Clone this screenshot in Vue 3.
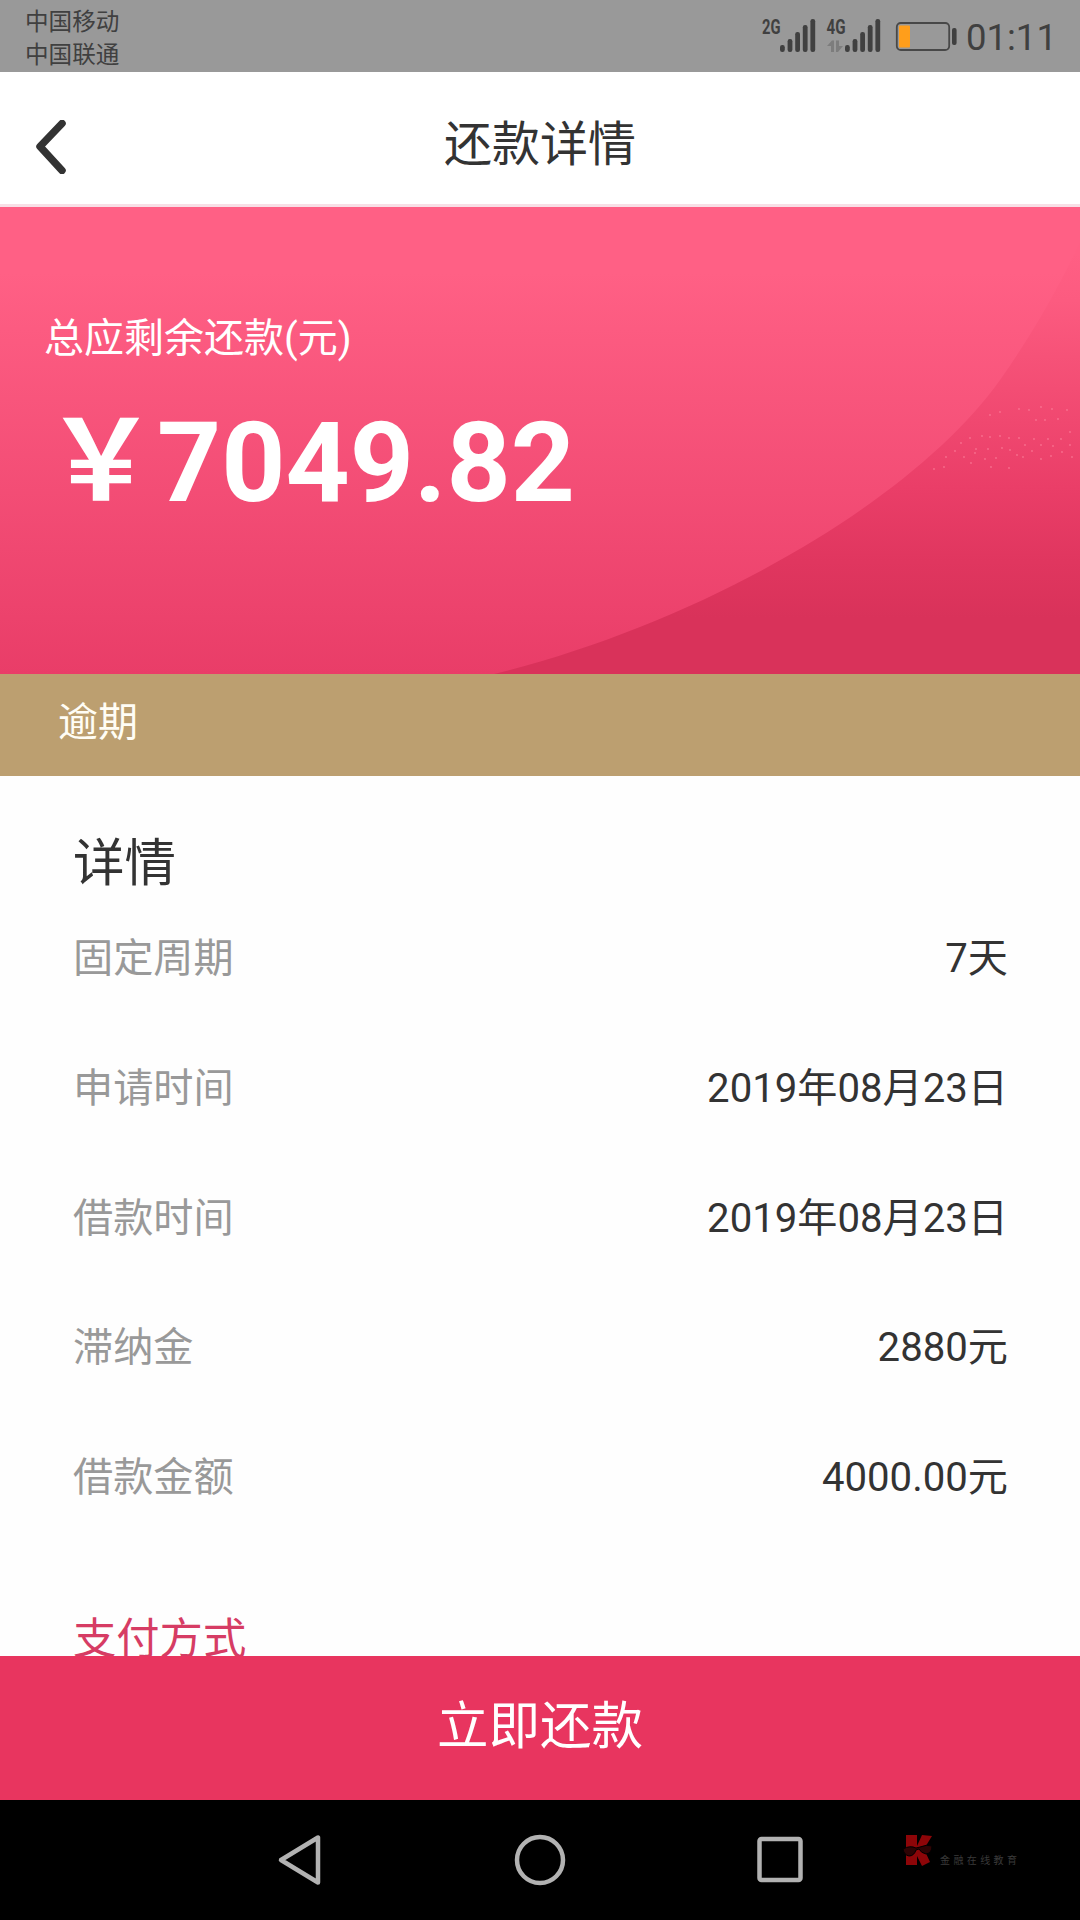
<script setup>
const rows = [
  { label: '固定周期', value: '7天' },
  { label: '申请时间', value: '2019年08月23日' },
  { label: '借款时间', value: '2019年08月23日' },
  { label: '滞纳金', value: '2880元' },
  { label: '借款金额', value: '4000.00元' }
]

// bar heights of the signal meter, shortest first
const bars = [7, 13, 20, 27, 33]

// faint sparkle specks on the banner, in banner coordinates
const specks = [
  [990, 208], [1000, 205], [1019, 202], [1029, 203], [1041, 200], [1052, 202], [1067, 203],
  [1036, 213], [1045, 213], [1058, 212], [1070, 225], [961, 236], [970, 231], [982, 229],
  [990, 230], [1000, 229], [1009, 231], [1019, 231], [1034, 232], [1048, 232], [1061, 232],
  [955, 244], [976, 242], [988, 242], [1002, 241], [1010, 243], [1025, 238], [1041, 238],
  [1053, 239], [1070, 238], [946, 250], [964, 250], [975, 246], [1032, 244], [1062, 245],
  [985, 252], [996, 251], [1017, 248], [1023, 250], [1041, 252], [1051, 249], [1072, 250],
  [934, 262], [944, 260], [971, 256], [991, 260], [1009, 261]
]
</script>

<template>
  <div class="screen">
    <header class="status">
      <div class="carriers">
        <span>中国移动</span>
        <span>中国联通</span>
      </div>
      <svg class="indicators" width="200" height="72" viewBox="760 0 200 72">
        <g class="net">
          <text x="762" y="34" textLength="18.5" lengthAdjust="spacingAndGlyphs">2G</text>
          <text x="826.5" y="34" textLength="19" lengthAdjust="spacingAndGlyphs">4G</text>
        </g>
        <g fill="#404040">
          <rect v-for="(h, i) in bars" :key="'a' + i" :x="780 + i * 7.6" :y="52 - h" width="4.8" :height="h" rx="2.2" />
          <rect v-for="(h, i) in bars" :key="'b' + i" :x="845 + i * 7.6" :y="52 - h" width="4.8" :height="h" rx="2.2" />
        </g>
        <path d="M827 46L832 40.500H834V52H831V46ZM836 40.500H839V46H843L838 52H836Z" fill="#7d7d7d" />
        <rect x="896.800" y="23" width="52.400" height="27" rx="4" fill="none" stroke="#484848" stroke-width="1.8" />
        <rect x="899" y="25.500" width="11" height="22" rx="1" fill="#ff9e1b" />
        <rect x="952" y="28" width="4.600" height="17" rx="2" fill="#404040" />
      </svg>
      <time class="clock">01:11</time>
    </header>

    <nav class="titlebar">
      <svg class="back" width="30" height="54" viewBox="0 0 30 54">
        <path d="M26 3.500L4 26.500L26 50.500" fill="none" stroke="#333" stroke-width="7.500" stroke-linecap="round" stroke-linejoin="round" />
      </svg>
      <h1>还款详情</h1>
    </nav>

    <section class="banner">
      <svg class="swoosh" width="1080" height="467" viewBox="0 0 1080 467">
        <defs>
          <linearGradient id="shade" x1="0" y1="0" x2="0" y2="467" gradientUnits="userSpaceOnUse">
            <stop offset=".1" stop-color="#ff5f84" />
            <stop offset=".2" stop-color="#fc5b80" />
            <stop offset=".32" stop-color="#f65278" />
            <stop offset=".46" stop-color="#f04870" />
            <stop offset=".6" stop-color="#ea3e68" />
            <stop offset=".76" stop-color="#e0365f" />
            <stop offset=".88" stop-color="#d9325a" />
            <stop offset="1" stop-color="#d9325a" />
          </linearGradient>
        </defs>
        <path d="M486 469C700 418 915 293 1000 173C1035 123 1060 78 1080 35V469Z" fill="url(#shade)" />
        <circle v-for="(p, i) in specks" :key="i" :cx="p[0]" :cy="p[1]" r=".9" fill="#ff8aa4" opacity=".6" />
      </svg>
      <p class="caption">总应剩余还款(元)</p>
      <p class="amount">￥7049.82</p>
    </section>

    <div class="state">逾期</div>

    <main class="details">
      <h2>详情</h2>
      <dl>
        <div v-for="row in rows" :key="row.label" class="row">
          <dt>{{ row.label }}</dt>
          <dd>{{ row.value }}</dd>
        </div>
      </dl>
      <h3>支付方式</h3>
    </main>

    <button class="pay">立即还款</button>

    <footer class="softkeys">
      <svg width="46" height="52" viewBox="0 0 46 52"><path d="M41 3.500V48.500L4 26Z" /></svg>
      <svg width="52" height="52" viewBox="0 0 52 52"><circle cx="26" cy="26" r="23" /></svg>
      <svg width="48" height="52" viewBox="0 0 48 52"><rect x="3.500" y="5" width="41" height="41" rx="2" /></svg>
      <div class="brand">
        <svg class="logo" width="32" height="32" viewBox="0 0 32 32">
          <path class="k" d="M4 1H15V12L20 1L30 2L22 15L28 28L20 32L15 22V31H4Z" />
          <path class="specs" d="M1 15Q8 11 14 14L18 13Q25 10 30 12Q30 19 24 20Q19 19 17 15L14 16Q12 22 7 22Q2 21 1 15Z" />
        </svg>
        <span>金融在线教育</span>
      </div>
    </footer>
  </div>
</template>

<style>
body {
  margin: 0;
  background: #fff;
}
</style>

<style scoped>
.screen {
  width: 1080px;
  height: 1920px;
  display: flex;
  flex-direction: column;
  overflow: hidden;
  background: #fefefe;
  color: #333;
  font-family: Roboto, "Noto Sans CJK SC", sans-serif;
}
h1, h2, h3, p, dl, dd {
  margin: 0;
  font-weight: 400;
}
.status {
  flex: none;
  height: 72px;
  display: flex;
  background: #999;
  color: #404040;
}
.carriers {
  flex: 1;
  display: flex;
  flex-direction: column;
  padding: 6px 0 0 25px;
  font-size: 23.6px;
  line-height: 33px;
}
.indicators {
  flex: none;
}
.net {
  font: 700 20px Roboto, sans-serif;
  fill: #404040;
}
.clock {
  width: 114px;
  padding-left: 6px;
  font-size: 36.500px;
  line-height: 75px;
}
.titlebar {
  flex: none;
  box-sizing: border-box;
  height: 135px;
  padding: 0 36px;
  display: grid;
  grid-template-columns: 30px 1fr 30px;
  align-items: center;
  background: #fff;
  border-bottom: 3px solid #f8dfe6;
}
.back {
  margin-top: 18px;
}
h1 {
  font-size: 48px;
  line-height: 60px;
  text-align: center;
  margin-top: 13px;
}
.banner {
  flex: none;
  position: relative;
  height: 467px;
  background: linear-gradient(#ff6085 0, #ff6085 14%, #e93d68 100%);
  color: #fff;
}
.swoosh {
  position: absolute;
  inset: 0;
}
.caption {
  position: relative;
  padding: 102px 0 0 44px;
  font-size: 40px;
  line-height: 60px;
}
.amount {
  position: relative;
  padding-left: 45px;
  margin-top: 24px;
  font-size: 112px;
  font-weight: 700;
  line-height: 140px;
}
.state {
  flex: none;
  box-sizing: border-box;
  height: 102px;
  padding: 19px 0 0 58px;
  background: #bc9f70;
  color: #fffdf5;
  font-size: 40px;
  line-height: 60px;
}
.details {
  flex: none;
  box-sizing: border-box;
  height: 880px;
  overflow: hidden;
  padding: 53px 72px 0 73px;
}
h2 {
  font-size: 51.500px;
  line-height: 62px;
  height: 61px;
  padding-bottom: 0;
}
h2 {
  line-height: 70px;
}
.row {
  display: flex;
  justify-content: space-between;
  align-items: center;
  height: 129.700px;
  font-size: 40.150px;
}
dt {
  color: #999;
}
h3 {
  margin-top: 71.500px;
  font-size: 43.300px;
  line-height: 60px;
  color: #d63c64;
}
.pay {
  flex: none;
  height: 144px;
  border: 0;
  padding: 0 0 2px;
  background: #e8355f;
  color: #fff;
  font: 400 51.500px/60px Roboto, "Noto Sans CJK SC", sans-serif;
}
.softkeys {
  flex: 1;
  display: flex;
  align-items: flex-start;
  padding: 34px 0 0 277px;
  background: #000;
}
.softkeys > svg {
  flex: none;
  fill: none;
  stroke: #b2b2b2;
  stroke-width: 4.500px;
  stroke-linejoin: round;
}
.softkeys > svg:nth-child(2) {
  margin-left: 191px;
}
.softkeys > svg:nth-child(3) {
  margin-left: 190px;
}
.brand {
  display: flex;
  align-items: flex-end;
  gap: 6px;
  margin-left: 98px;
  color: #3a3a3a;
  font-size: 10px;
  line-height: 10px;
  letter-spacing: 3.400px;
  white-space: nowrap;
}
.k {
  fill: #8d0508;
}
.specs {
  fill: #2e0304;
  stroke: #000;
}
</style>
